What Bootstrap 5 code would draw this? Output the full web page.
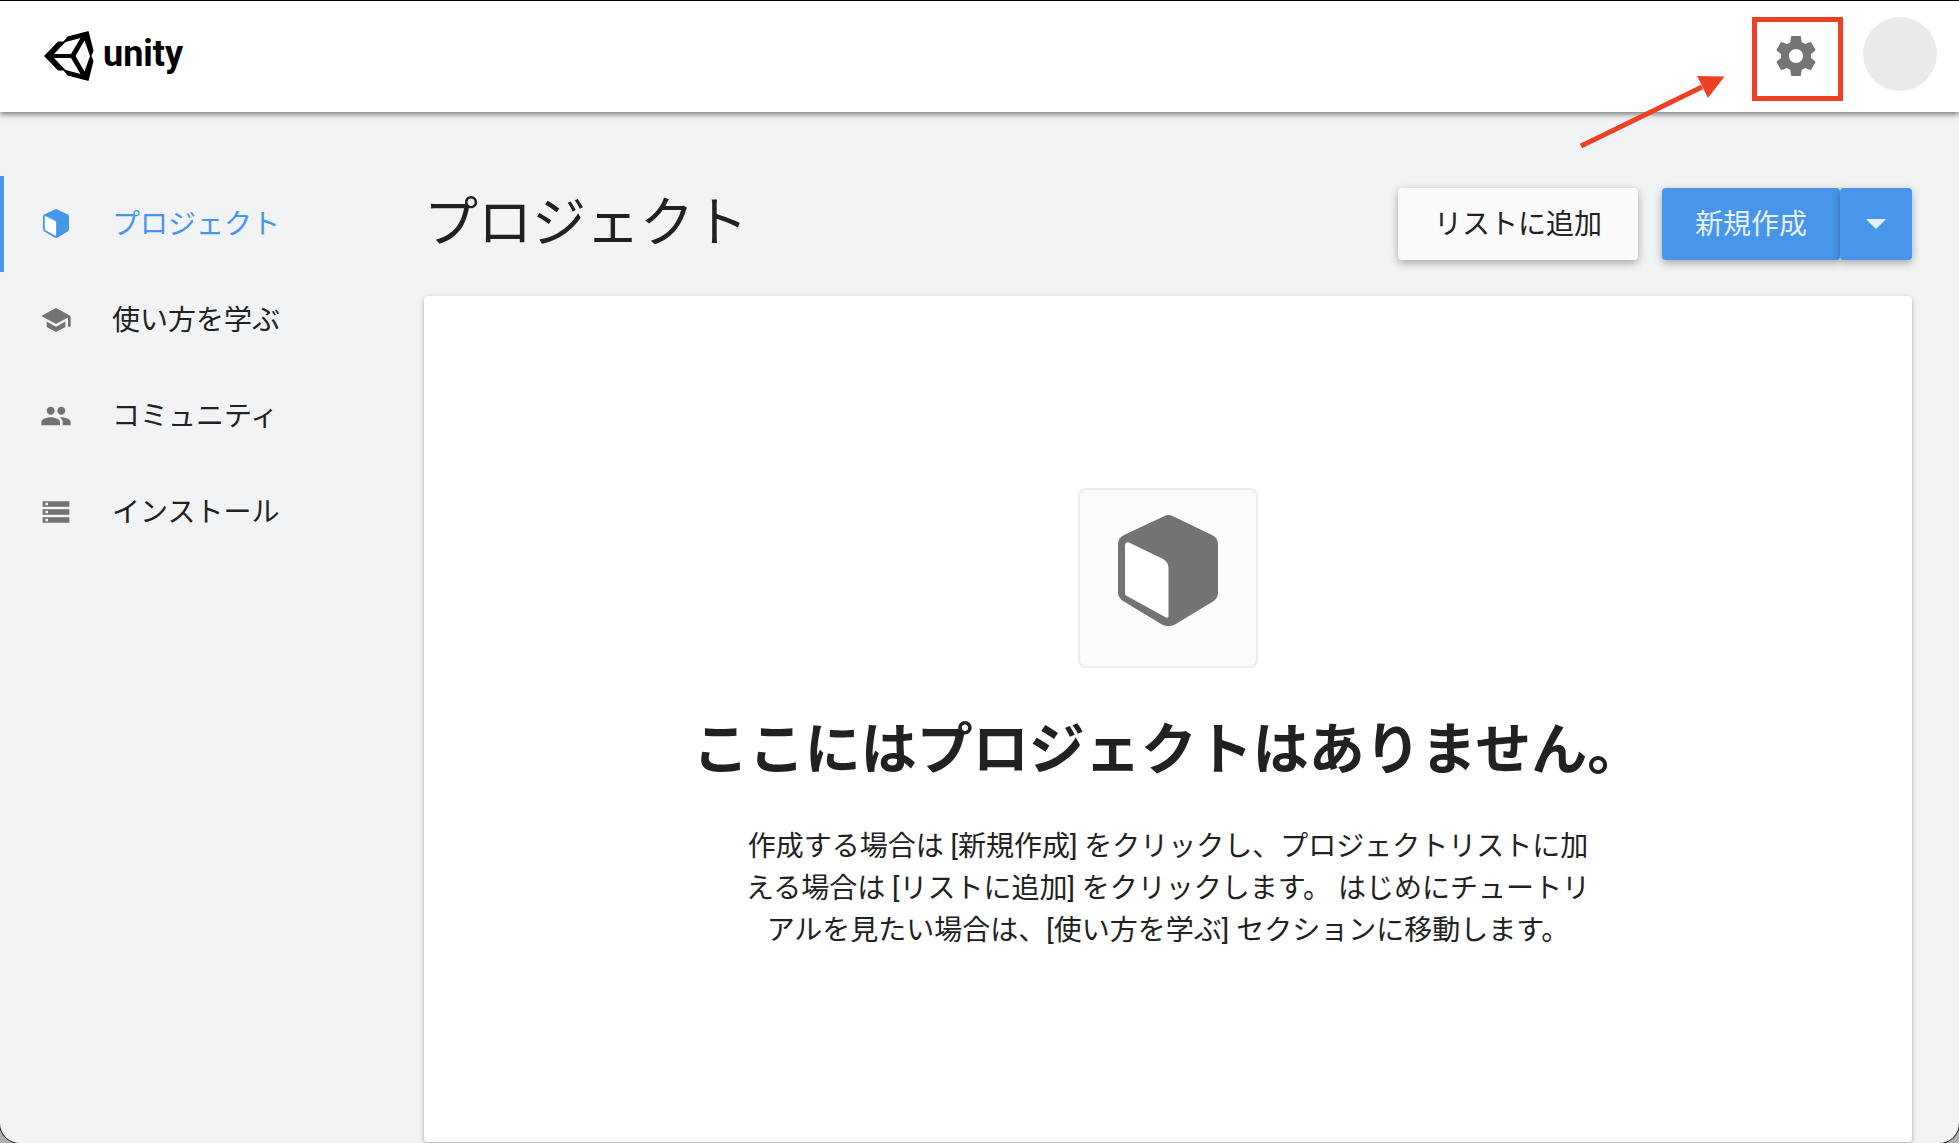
<!DOCTYPE html>
<html lang="ja">
<head>
<meta charset="utf-8">
<meta name="viewport" content="width=device-width, initial-scale=1">
<title>Unity Hub</title>
<link href="https://cdn.jsdelivr.net/npm/bootstrap@5.3.0/dist/css/bootstrap.min.css" rel="stylesheet">
<style>
  body { background: #b0b0b0; color: #212121; font-family: Roboto, "Noto Sans CJK JP", sans-serif; font-size: 28px; line-height: 42px; }
  .hub-window { background: #f1f3f5; border-top: 1px solid #000; border-radius: 0 0 20px 20px; box-shadow: 0 0 0 1px #222; overflow: hidden; }
  .hub-header { height: 111px; padding: 0 22px 2px 44px; background: #fff; box-shadow: 0 2px 6px rgba(0, 0, 0, .55); z-index: 2; }
  .hub-brand { gap: 9px; color: #000; font-size: 36px; font-weight: 700; line-height: 48px; }
  .hub-brand span { padding-bottom: 4px; }
  .hub-tools { gap: 43px; }
  .hub-gear { width: 48px; height: 48px; color: #757575; }
  .hub-avatar { width: 74px; height: 74px; background: #ebebeb; }
  .hub-frame { inset: -15px -23px -21px -20px; border: 5px solid #ee4025; pointer-events: none; }
  .hub-arrow { width: 146px; height: 76px; left: -192px; top: 43px; pointer-events: none; }
  .hub-side { width: 376px; padding-top: 64px; }
  .hub-link { gap: 40px; height: 96px; padding: 0 36px; border-left: 4px solid transparent; color: #212121; }
  .hub-link span { padding-top: 2px; }
  .hub-link svg { width: 32px; height: 32px; color: #707372; }
  .hub-link.active, .hub-link.active svg { color: #4796eb; }
  .hub-link.active { border-color: #4796eb; }
  .hub-main { padding: 76px 47px 1px 48px; }
  .hub-title { font-size: 54px; line-height: 72px; font-weight: 400; }
  .hub-btn { height: 72px; padding: 2px 0 0; border: 0; border-radius: 4px; font-size: 28px; line-height: 42px; box-shadow: 0 3px 8px rgba(0, 0, 0, .32); }
  .hub-add, .hub-add:hover { width: 240px; background: #fafafa; color: #212121; }
  .hub-new, .hub-new:hover { background: #4796eb; color: #e5f1fd; }
  .hub-new-text { width: 178px; }
  .hub-new-menu { width: 72px; }
  .hub-panel { margin-top: 36px; padding-top: 192px; background: #fff; border-radius: 4px; box-shadow: 0 2px 5px rgba(0, 0, 0, .3); }
  .hub-tile { width: 180px; height: 180px; padding-bottom: 15px; background: #fbfbfb; border: 2px solid #ededed; border-radius: 8px; color: #737373; }
  .hub-empty { margin: 40px 0 34px; font-size: 56px; line-height: 84px; font-weight: 700; }
  .hub-note { max-width: 848px; }
</style>
<script src="https://cdn.jsdelivr.net/npm/bootstrap@5.3.0/dist/js/bootstrap.bundle.min.js"></script>
</head>
<body>
<svg class="d-none" aria-hidden="true">
  <symbol id="cube" viewBox="0 0 100 111">
    <path fill="currentColor" d="M46 1.200Q50.500-1 55 1.200L94 20Q100 23 100 29V78Q100 83 95 86.500L57 109.500Q50.500 112.500 44 109.500L5 86Q0 82.500 0 77V29Q0 23 6 20Z"/>
    <path fill="#fff" d="M7 30Q7.500 26.500 11 27.500L45 44Q50.500 47 50.500 53V101Q50.500 103.500 48 102.500L8 80.500Q7 80 7 78Z"/>
  </symbol>
</svg>
<div class="hub-window d-flex flex-column min-vh-100">
  <header class="hub-header d-flex align-items-center justify-content-between flex-shrink-0 position-relative">
    <a href="#" class="hub-brand d-flex align-items-center text-decoration-none">
      <svg width="50" height="50" viewBox="0 0 50 50" aria-hidden="true">
        <path fill="#000" fill-rule="evenodd" d="M0 25L14 10.500H19.500L23.500 5.500L44.500 0L49.500 19.500L47.500 25L49.500 30L44.500 50L23.500 44.500L19.500 39.500H14ZM10 23H27L36.500 7L21.500 11ZM31.500 25L40.500 40.500L46 25L40.500 9.500ZM10 27L21.500 39L36.500 43L27 27Z"/>
      </svg>
      <span>unity</span>
    </a>
    <div class="hub-tools d-flex align-items-center">
      <div class="position-relative">
        <button type="button" class="hub-gear btn p-0 border-0 d-block" aria-label="設定">
          <svg class="d-block" width="48" height="48" viewBox="0 0 24 24" fill="currentColor" aria-hidden="true"><path d="M19.430 12.980c.040-.320.070-.640.070-.980s-.030-.660-.070-.980l2.110-1.650c.190-.150.240-.420.120-.640l-2-3.460c-.120-.220-.390-.300-.610-.220l-2.490 1c-.520-.400-1.080-.730-1.690-.980l-.380-2.650C14.460 2.180 14.250 2 14 2h-4c-.250 0-.460.180-.490.420l-.380 2.650c-.610.250-1.170.590-1.690.980l-2.490-1c-.230-.090-.490 0-.610.220l-2 3.460c-.130.220-.070.490.120.640l2.110 1.650c-.040.320-.070.650-.070.980s.030.660.070.980l-2.110 1.650c-.190.150-.240.420-.120.640l2 3.460c.120.220.390.300.610.220l2.490-1c.520.400 1.080.730 1.690.980l.380 2.650c.030.240.240.420.490.420h4c.250 0 .460-.180.490-.420l.380-2.650c.610-.250 1.170-.590 1.690-.980l2.490 1c.230.090.490 0 .610-.220l2-3.460c.120-.220.070-.490-.120-.640l-2.110-1.650zM12 15.500c-1.930 0-3.500-1.570-3.500-3.500s1.570-3.500 3.500-3.500 3.500 1.570 3.500 3.500-1.570 3.500-3.500 3.500z"/></svg>
        </button>
        <span class="hub-frame position-absolute"></span>
        <svg class="hub-arrow position-absolute" viewBox="0 0 146 76" aria-hidden="true">
          <path d="M1 71L122 12" stroke="#ee4025" stroke-width="5"/><path d="M117 1L144.500 1.500L128 23Z" fill="#ee4025"/>
        </svg>
      </div>
      <div class="hub-avatar rounded-circle mb-1"></div>
    </div>
  </header>
  <div class="d-flex flex-grow-1">
    <nav class="hub-side flex-shrink-0 nav flex-column flex-nowrap">
      <a href="#" class="hub-link active d-flex align-items-center text-decoration-none"><svg aria-hidden="true"><use href="#cube" x="3" y="1" width="26" height="29"/></svg><span>プロジェクト</span></a>
      <a href="#" class="hub-link d-flex align-items-center text-decoration-none"><svg viewBox="0 0 24 24" fill="currentColor" aria-hidden="true"><path d="M5 13.180v4L12 21l7-3.820v-4L12 17l-7-3.820zM12 3L1 9l11 6 9-4.910V17h2V9L12 3z"/></svg><span>使い方を学ぶ</span></a>
      <a href="#" class="hub-link d-flex align-items-center text-decoration-none"><svg viewBox="0 0 24 24" fill="currentColor" aria-hidden="true"><path d="M16 11c1.660 0 2.990-1.340 2.990-3S17.660 5 16 5c-1.660 0-3 1.340-3 3s1.340 3 3 3zm-8 0c1.660 0 2.990-1.340 2.990-3S9.660 5 8 5C6.340 5 5 6.340 5 8s1.340 3 3 3zm0 2c-2.330 0-7 1.170-7 3.500V19h14v-2.500c0-2.330-4.670-3.500-7-3.500zm8 0c-.290 0-.620.020-.970.050 1.160.840 1.970 1.970 1.970 3.450V19h6v-2.500c0-2.330-4.670-3.500-7-3.500z"/></svg><span>コミュニティ</span></a>
      <a href="#" class="hub-link d-flex align-items-center text-decoration-none"><svg viewBox="0 0 24 24" fill="currentColor" aria-hidden="true"><path d="M2 20h20v-4H2v4zm2-3h2v2H4v-2zM2 4v4h20V4H2zm4 3H4V5h2v2zm-4 7h20v-4H2v4zm2-3h2v2H4v-2z"/></svg><span>インストール</span></a>
    </nav>
    <main class="hub-main flex-grow-1 d-flex flex-column">
      <div class="d-flex align-items-center justify-content-between">
        <h1 class="hub-title mb-0">プロジェクト</h1>
        <div class="d-flex gap-4">
          <button type="button" class="hub-btn hub-add btn">リストに追加</button>
          <div class="d-flex">
            <button type="button" class="hub-btn hub-new hub-new-text btn">新規作成</button>
            <button type="button" class="hub-btn hub-new hub-new-menu btn p-0 d-flex align-items-center justify-content-center" aria-label="バージョンを選択"><svg width="20" height="10" viewBox="0 0 20 10" aria-hidden="true"><path d="M0 0H20L10 10Z" fill="currentColor"/></svg></button>
          </div>
        </div>
      </div>
      <section class="hub-panel flex-grow-1 d-flex flex-column align-items-center text-center">
        <div class="hub-tile d-flex align-items-center justify-content-center"><svg width="100" height="111" aria-hidden="true"><use href="#cube"/></svg></div>
        <h2 class="hub-empty">ここにはプロジェクトはありません。</h2>
        <p class="hub-note mb-0">作成する場合は [新規作成] をクリックし、プロジェクトリストに加える場合は [リストに追加] をクリックします。 はじめにチュートリアルを見たい場合は、[使い方を学ぶ] セクションに移動します。</p>
      </section>
    </main>
  </div>
</div>
</body>
</html>
